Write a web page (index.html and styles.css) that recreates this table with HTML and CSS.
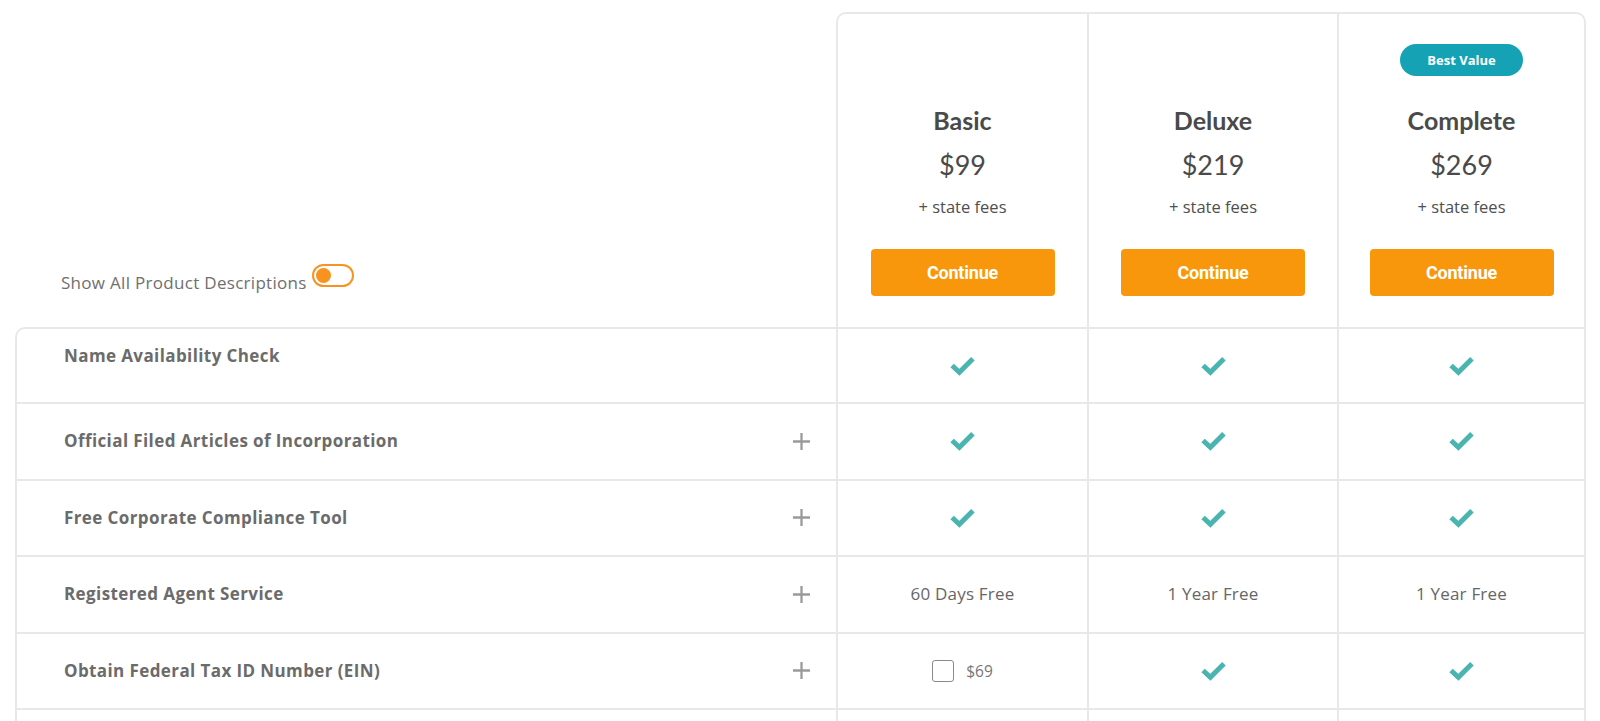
FILE: index.html
```html
<!DOCTYPE html>
<html lang="en">
<head>
<meta charset="utf-8">
<title>Compare Packages</title>
<link rel="stylesheet" href="styles.css">
</head>
<body>
<div class="compare">
  <div class="head-left">
    <span class="toggle-label">Show All Product Descriptions</span>
    <span class="toggle"><span class="knob"></span></span>
  </div>
  <div class="plan plan-first">
    <span class="badge badge-hidden">Best Value</span>
    <div class="plan-name">Basic</div>
    <div class="plan-price">$99</div>
    <div class="plan-fees">+ state fees</div>
    <button class="btn">Continue</button>
  </div>
  <div class="plan">
    <span class="badge badge-hidden">Best Value</span>
    <div class="plan-name">Deluxe</div>
    <div class="plan-price">$219</div>
    <div class="plan-fees">+ state fees</div>
    <button class="btn">Continue</button>
  </div>
  <div class="plan plan-last">
    <span class="badge">Best Value</span>
    <div class="plan-name">Complete</div>
    <div class="plan-price">$269</div>
    <div class="plan-fees">+ state fees</div>
    <button class="btn">Continue</button>
  </div>

  <div class="feat feat-first feat-top"><span class="feat-name">Name Availability Check</span></div>
  <div class="cell"><svg class="check" viewBox="0 0 24 19"><polyline points="2,9 9,15.5 22,2.5"/></svg></div>
  <div class="cell"><svg class="check" viewBox="0 0 24 19"><polyline points="2,9 9,15.5 22,2.5"/></svg></div>
  <div class="cell cell-last"><svg class="check" viewBox="0 0 24 19"><polyline points="2,9 9,15.5 22,2.5"/></svg></div>

  <div class="feat"><span class="feat-name">Official Filed Articles of Incorporation</span><svg class="plus" viewBox="0 0 20 20"><path d="M10 1v18M1 10h18"/></svg></div>
  <div class="cell"><svg class="check" viewBox="0 0 24 19"><polyline points="2,9 9,15.5 22,2.5"/></svg></div>
  <div class="cell"><svg class="check" viewBox="0 0 24 19"><polyline points="2,9 9,15.5 22,2.5"/></svg></div>
  <div class="cell cell-last"><svg class="check" viewBox="0 0 24 19"><polyline points="2,9 9,15.5 22,2.5"/></svg></div>

  <div class="feat"><span class="feat-name">Free Corporate Compliance Tool</span><svg class="plus" viewBox="0 0 20 20"><path d="M10 1v18M1 10h18"/></svg></div>
  <div class="cell"><svg class="check" viewBox="0 0 24 19"><polyline points="2,9 9,15.5 22,2.5"/></svg></div>
  <div class="cell"><svg class="check" viewBox="0 0 24 19"><polyline points="2,9 9,15.5 22,2.5"/></svg></div>
  <div class="cell cell-last"><svg class="check" viewBox="0 0 24 19"><polyline points="2,9 9,15.5 22,2.5"/></svg></div>

  <div class="feat"><span class="feat-name">Registered Agent Service</span><svg class="plus" viewBox="0 0 20 20"><path d="M10 1v18M1 10h18"/></svg></div>
  <div class="cell"><span class="cell-text">60 Days Free</span></div>
  <div class="cell"><span class="cell-text">1 Year Free</span></div>
  <div class="cell cell-last"><span class="cell-text">1 Year Free</span></div>

  <div class="feat"><span class="feat-name">Obtain Federal Tax ID Number (EIN)</span><svg class="plus" viewBox="0 0 20 20"><path d="M10 1v18M1 10h18"/></svg></div>
  <div class="cell"><label class="addon"><span class="box"></span><span class="addon-price">$69</span></label></div>
  <div class="cell"><svg class="check" viewBox="0 0 24 19"><polyline points="2,9 9,15.5 22,2.5"/></svg></div>
  <div class="cell cell-last"><svg class="check" viewBox="0 0 24 19"><polyline points="2,9 9,15.5 22,2.5"/></svg></div>

  <div class="feat"></div>
  <div class="cell"></div>
  <div class="cell"></div>
  <div class="cell cell-last"></div>
</div>
</body>
</html>
```

FILE: styles.css
```css
* { box-sizing: border-box; }

html, body {
  margin: 0;
  padding: 0;
  background: #ffffff;
  font-family: "Open Sans", Lato, Arial, sans-serif;
  color: #555555;
  overflow: hidden;
}

.compare {
  display: grid;
  grid-template-columns: 821px 251px 250px 249px;
  grid-template-rows: 315px 75px;
  grid-auto-rows: 76.5px;
  margin: 12px 0 0 15px;
  width: 1571px;
}

/* ---- header ---- */
.head-left {
  display: flex;
  align-items: flex-end;
  padding: 0 0 33px 46px;
}

.toggle-label {
  font-size: 17px;
  line-height: 22px;
  letter-spacing: 0.3px;
  color: #6f6f6f;
}

.toggle {
  display: inline-flex;
  align-items: center;
  width: 42px;
  height: 23px;
  margin: 0 0 7px 5px;
  border: 2.5px solid #f7931e;
  border-radius: 12px;
  padding-left: 2px;
  background: #ffffff;
}

.knob {
  width: 15px;
  height: 15px;
  border-radius: 50%;
  background: #f7931e;
}

.plan {
  display: flex;
  flex-direction: column;
  align-items: center;
  border-top: 2px solid #e8e8e8;
  border-left: 2px solid #e8e8e8;
  padding-top: 30px;
  font-family: Lato, "Open Sans", Arial, sans-serif;
}

.plan-first { border-top-left-radius: 10px; }
.plan-last {
  border-right: 2px solid #e8e8e8;
  border-top-right-radius: 10px;
}

.badge {
  display: inline-flex;
  align-items: center;
  justify-content: center;
  width: 123px;
  height: 32px;
  border-radius: 16px;
  background: #16a2b5;
  color: #ffffff;
  font-family: "Open Sans", Arial, sans-serif;
  font-size: 13px;
  font-weight: 700;
}

.badge-hidden { visibility: hidden; }

.plan-name {
  margin-top: 29px;
  font-size: 25px;
  line-height: 30px;
  font-weight: 700;
  color: #4a4a4a;
}

.plan-price {
  margin-top: 14px;
  font-size: 27px;
  line-height: 32px;
  color: #4a4a4a;
}

.plan-fees {
  margin-top: 15px;
  font-family: "Open Sans", Arial, sans-serif;
  font-size: 16.5px;
  line-height: 22px;
  color: #4f4f4f;
}

.btn {
  margin-top: 31px;
  width: 184px;
  height: 47px;
  border: none;
  border-radius: 4px;
  background: #f8970c;
  color: #ffffff;
  font-family: Roboto, Arial, sans-serif;
  font-size: 18px;
  font-weight: 700;
  letter-spacing: -0.2px;
}

/* ---- body rows ---- */
.feat {
  display: flex;
  align-items: center;
  justify-content: space-between;
  border-top: 2px solid #e8e8e8;
  border-left: 2px solid #e8e8e8;
  padding: 0 25px 0 47px;
}

.feat-first { border-top-left-radius: 10px; }

.feat-top {
  align-items: flex-start;
  padding-top: 16px;
}

.feat-name {
  font-size: 17px;
  line-height: 22px;
  font-weight: 700;
  letter-spacing: 0.4px;
  color: #6b6b6b;
}

.plus {
  width: 19px;
  height: 19px;
  fill: none;
  stroke: #9a9a9a;
  stroke-width: 2.4;
}

.cell {
  display: flex;
  align-items: center;
  justify-content: center;
  border-top: 2px solid #e8e8e8;
  border-left: 2px solid #e8e8e8;
}

.cell-last { border-right: 2px solid #e8e8e8; }

.check {
  width: 25px;
  height: 20px;
  fill: none;
  stroke: #49b4b0;
  stroke-width: 4.8;
  stroke-linejoin: miter;
  stroke-linecap: butt;
}

.cell-text {
  font-size: 17px;
  line-height: 22px;
  letter-spacing: 0.2px;
  color: #666666;
}

.addon {
  display: flex;
  align-items: center;
}

.box {
  width: 22px;
  height: 22px;
  border: 1.5px solid #8a8a8a;
  border-radius: 3px;
}

.addon-price {
  margin-left: 12px;
  font-size: 15.5px;
  color: #777777;
}
```
